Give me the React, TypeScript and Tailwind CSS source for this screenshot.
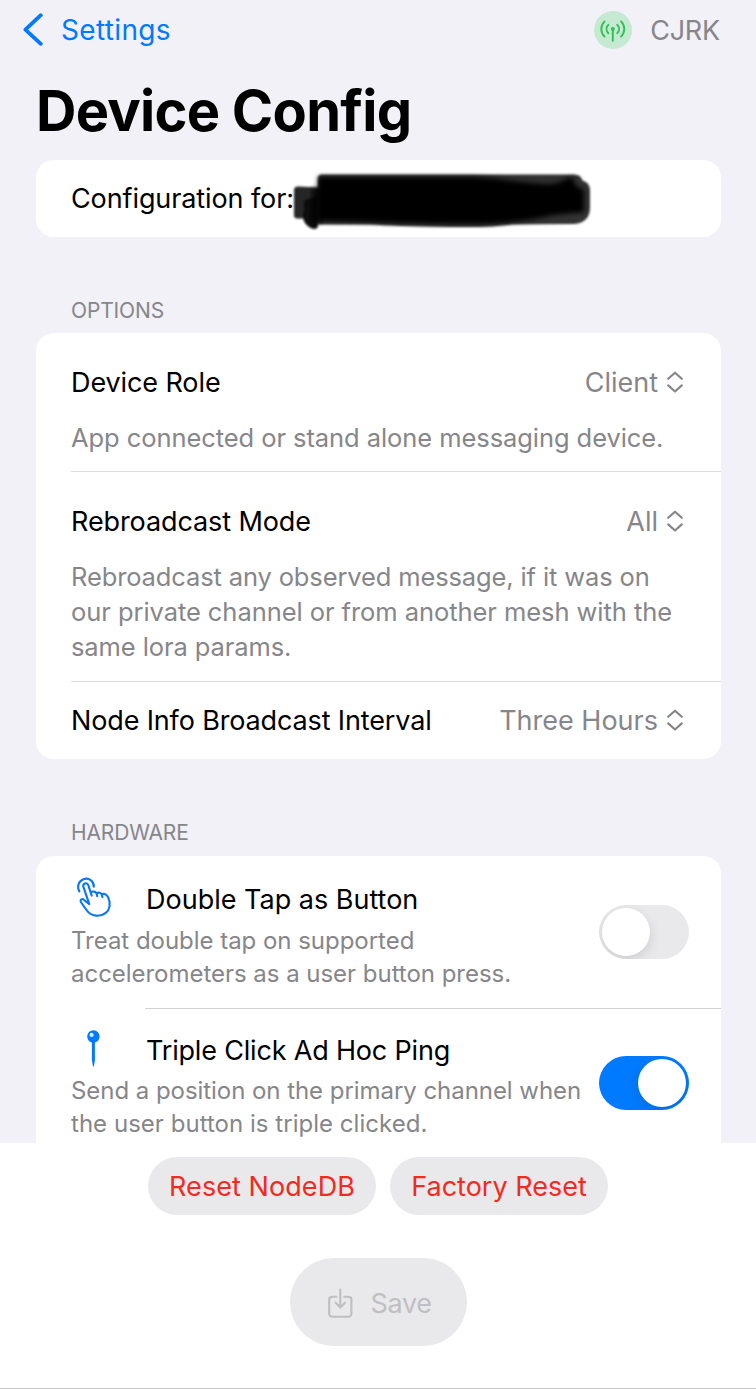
import type { ReactNode } from 'react';

const BackChevron = () => (
  <svg className="h-[34px] w-[22px]" viewBox="0 0 22 34" fill="none" stroke="#007aff" strokeWidth="3.8" strokeLinecap="round" strokeLinejoin="round">
    <path d="M18.8 2.2 3.4 16.6l15.4 14.2" />
  </svg>
);

const Antenna = () => (
  <svg className="size-[38px]" viewBox="0 0 38 38" fill="none" stroke="#2fc254" strokeWidth="1.9" strokeLinecap="round">
    <path d="M18.8 19v10.8M14.3 13.8c-2.3 2.4-2.3 6 0 8.4M23.3 13.8c2.3 2.4 2.3 6 0 8.4M10.6 10.4c-4.4 4.3-4.4 10.9 0 15.2M27 10.4c4.4 4.3 4.4 10.9 0 15.2" />
    <circle cx="18.8" cy="18" r="2" fill="#2fc254" stroke="none" />
  </svg>
);

const UpDown = () => (
  <svg className="ml-[8px] h-[24px] w-[18px] shrink-0" viewBox="0 0 18 24" fill="none" stroke="#86868a" strokeWidth="2.2" strokeLinecap="round" strokeLinejoin="round">
    <path d="M2.2 7.8 9 1.7l6.8 6.1M2.2 14.4 9 20.500l6.800-6.100" />
  </svg>
);

const TapHand = () => (
  <svg className="ml-[5px] h-[42px] w-[36px]" viewBox="0 2.5 36 42" fill="none" stroke="#0a78f5" strokeWidth="2.1" strokeLinecap="round" strokeLinejoin="round" overflow="visible">
    <path d="M3.4 14.9C0.6 10.2 2.6 4.6 7.4 2.7c5.4-2 10.6 2 10.4 7.6" />
    <path d="M13.3 27.6 7.4 10.4C6.4 6.8 11 5.4 12.3 8.7l3.4 10.4M14.7 16.1c2-1.9 5.2-1.2 6 1.4l.6 2.3M20.6 16.9c2-1.5 4.5-.8 5.2 1.4l.6 2.3M25.7 18c2.8-1.6 5.2.2 6.6 3.2 2.7 6 1.5 12-2.5 15.2-5.4 4.2-13.8 3.6-18-1.3-3-3.6-4.8-6.4-6.9-9.6-1.1-2 .9-3.8 2.9-2.3l5.5 4.4" />
  </svg>
);

const Pin = () => (
  <svg className="ml-[13px] h-[40px] w-[18px]" viewBox="0 1.500 18 40" overflow="visible">
    <path d="M7.9 10h3v20.5L9.9 37h-.9l-1.1-6.5z" fill="#007aff" />
    <circle cx="9.4" cy="7" r="6.2" fill="#007aff" />
    <circle cx="7.6" cy="5.4" r="2.1" fill="#d9ebff" />
  </svg>
);

const SaveIcon = () => (
  <svg className="h-[32px] w-[25px]" viewBox="0 0.7 25 32" fill="none" stroke="#bfbfc2" strokeWidth="2.1" strokeLinecap="round" strokeLinejoin="round">
    <path d="M8.4 9.4H4.2a3 3 0 0 0-3 3v14a3 3 0 0 0 3 3h16.2a3 3 0 0 0 3-3v-14a3 3 0 0 0-3-3h-4.2M12.3 2.2v17.6M7.6 15.4l4.7 4.7 4.7-4.7" />
  </svg>
);

const Scribble = () => (
  <svg className="absolute top-[10px] left-[254px] h-[64px] w-[310px]" viewBox="0 0 310 64">
    <defs>
      <filter id="soft" x="-5%" y="-10%" width="110%" height="120%">
        <feGaussianBlur stdDeviation="1.3" />
      </filter>
      <filter id="softer" x="-5%" y="-20%" width="110%" height="140%">
        <feGaussianBlur stdDeviation="2.4" />
      </filter>
    </defs>
    <g filter="url(#soft)">
      <path d="M4 20q0-4 5-3.500l19 1V50L15 48.500H8Q4 49 4 45z" fill="#262626" />
      <path d="M28 8q0-3.500 4-3.500h252q7 0 8.500 6 7.500 2 7.500 10v17q0 15-16 16.500l-62 .5q-20 3-60 2.500-60-1-82-2.500H28z" fill="#303030" />
      <path d="M14 30l14-4v29q0 4-4 4-9-2-11-11z" fill="#090909" />
    </g>
    <g filter="url(#softer)">
      <path d="M28 7h148c30 0 52 6 82 7 14 0 18-8 25-6l3 8 8 4v22l-30 3c-26 6-50 9-85 9-50 0-96-2-151-3z" fill="#000" />
    </g>
    <path d="M22 18h11v34H20z" fill="#000" opacity=".75" filter="url(#softer)" />
  </svg>
);

type PickerProps = { label: string; value: string; className: string; labelClass?: string };

const Picker = ({ label, value, className, labelClass = 'tracking-[-0.1px]' }: PickerProps) => (
  <div className={`flex items-center pr-[37px] text-[27px] ${className}`}>
    <span className={`flex-1 ${labelClass}`}>{label}</span>
    <span className="text-[#86868a]">{value}</span>
    <UpDown />
  </div>
);

const Toggle = ({ on }: { on: boolean }) => (
  <button
    role="switch"
    aria-checked={on}
    className={`mr-[32px] flex h-[54px] w-[90px] shrink-0 items-center overflow-hidden rounded-full px-[3px] ${on ? 'justify-end bg-[#007aff]' : 'justify-start bg-[#e9e9eb]'}`}
  >
    <span className="size-[48px] rounded-full bg-white shadow-[0_4px_12px_rgba(0,0,0,0.12)]" />
  </button>
);

const SectionTitle = ({ children }: { children: ReactNode }) => (
  <h2 className="mt-[60px] flex h-[28px] shrink-0 items-center pl-[71px] text-[21px] tracking-[-0.15px] text-[#86868a]">{children}</h2>
);

export default function App() {
  return (
    <div className="flex h-[1389px] w-[756px] flex-col overflow-hidden bg-[#f2f1f7] font-['Inter',sans-serif] whitespace-nowrap text-black">
      <header className="flex h-[60px] shrink-0 items-center pr-[36px] pb-px pl-[22px]">
        <BackChevron />
        <span className="ml-[17px] text-[28px] tracking-[0.35px] text-[#007aff]">Settings</span>
        <div className="ml-auto size-[38px] rounded-full bg-[#c6e9d1]">
          <Antenna />
        </div>
        <span className="ml-[18px] pt-[3px] text-[27px] tracking-[-0.2px] text-[#86868a]">CJRK</span>
      </header>
      <h1 className="flex h-[100px] shrink-0 items-center pt-[2px] pl-[36px] text-[56px] font-bold tracking-[-0.75px]">Device Config</h1>

      <section className="relative ml-[36px] flex h-[77px] w-[685px] shrink-0 items-center rounded-[18px] bg-white pt-[2px] pl-[35px]">
        <span className="text-[27px] tracking-[-0.1px]">Configuration for:</span>
        <Scribble />
      </section>

      <SectionTitle>OPTIONS</SectionTitle>
      <section className="mt-[8px] ml-[36px] h-[426px] w-[685px] shrink-0 rounded-[18px] bg-white pl-[35px]">
        <Picker label="Device Role" value="Client" className="pt-[31px] pb-[2px] leading-[38px]" />
        <p className="mt-[16px] text-[25.5px] leading-[36px] tracking-[-0.07px] text-[#86868a]">App connected or stand alone messaging device.</p>
        <div className="mt-[15px] h-px bg-[#dcdcde]" />
        <Picker label="Rebroadcast Mode" value="All" className="pt-[31px] leading-[38px]" />
        <p className="mt-[18px] text-[25.5px] leading-[35px] text-[#86868a]">
          <span className="tracking-[-0.13px]">Rebroadcast any observed message, if it was on</span>
          <br />
          <span className="tracking-[-0.06px]">our private channel or from another mesh with the</span>
          <br />
          <span className="tracking-[-0.1px]">same lora params.</span>
        </p>
        <div className="mt-[17px] h-px bg-[#dcdcde]" />
        <Picker label="Node Info Broadcast Interval" value="Three Hours" className="h-[77px] pt-px" labelClass="tracking-[-0.14px]" />
      </section>

      <SectionTitle>HARDWARE</SectionTitle>
      <section className="mt-[9px] ml-[36px] flex h-[287px] w-[685px] shrink-0 flex-col overflow-hidden rounded-t-[18px] bg-white pl-[35px]">
        <div className="flex h-[152px] shrink-0 items-center justify-between">
          <div className="pt-[9px]">
            <div className="flex h-[34px] items-center">
              <div className="w-[75px] shrink-0"><TapHand /></div>
              <span className="text-[27px]">Double Tap as Button</span>
            </div>
            <p className="mt-[7px] text-[24px] leading-[33px] tracking-[-0.03px] text-[#86868a]">
              Treat double tap on supported
              <br />
              accelerometers as a user button press.
            </p>
          </div>
          <Toggle on={false} />
        </div>
        <div className="ml-[74px] h-px shrink-0 bg-[#d3d3d6]" />
        <div className="flex h-[148px] shrink-0 items-center justify-between">
          <div className="pt-[8px]">
            <div className="flex h-[34px] items-center">
              <div className="w-[75px] shrink-0"><Pin /></div>
              <span className="text-[27px] tracking-[-0.18px]">Triple Click Ad Hoc Ping</span>
            </div>
            <p className="mt-[6px] text-[24px] leading-[33px] tracking-[-0.05px] text-[#86868a]">
              Send a position on the primary channel when
              <br />
              <span className="tracking-[0.03px]">the user button is triple clicked.</span>
            </p>
          </div>
          <Toggle on />
        </div>
      </section>

      <footer className="flex flex-1 flex-col items-center border-b border-[#c9c9cb] bg-white pt-[14px]">
        <div className="flex gap-[14px] text-[27px] text-[#f5291d]">
          <button className="flex h-[58px] w-[228px] items-center justify-center rounded-full bg-[#e9e9eb] pt-[3px] tracking-[0.07px]">Reset NodeDB</button>
          <button className="flex h-[58px] w-[218px] items-center justify-center rounded-full bg-[#e9e9eb] pt-[3px]">Factory Reset</button>
        </div>
        <button className="mt-[43px] flex h-[88px] w-[177px] items-center rounded-full bg-[#e9e9eb] pt-[4px] pl-[38px] text-[27px] tracking-[-0.3px] text-[#bfbfc2]">
          <SaveIcon />
          <span className="ml-[18px]">Save</span>
        </button>
      </footer>
    </div>
  );
}
